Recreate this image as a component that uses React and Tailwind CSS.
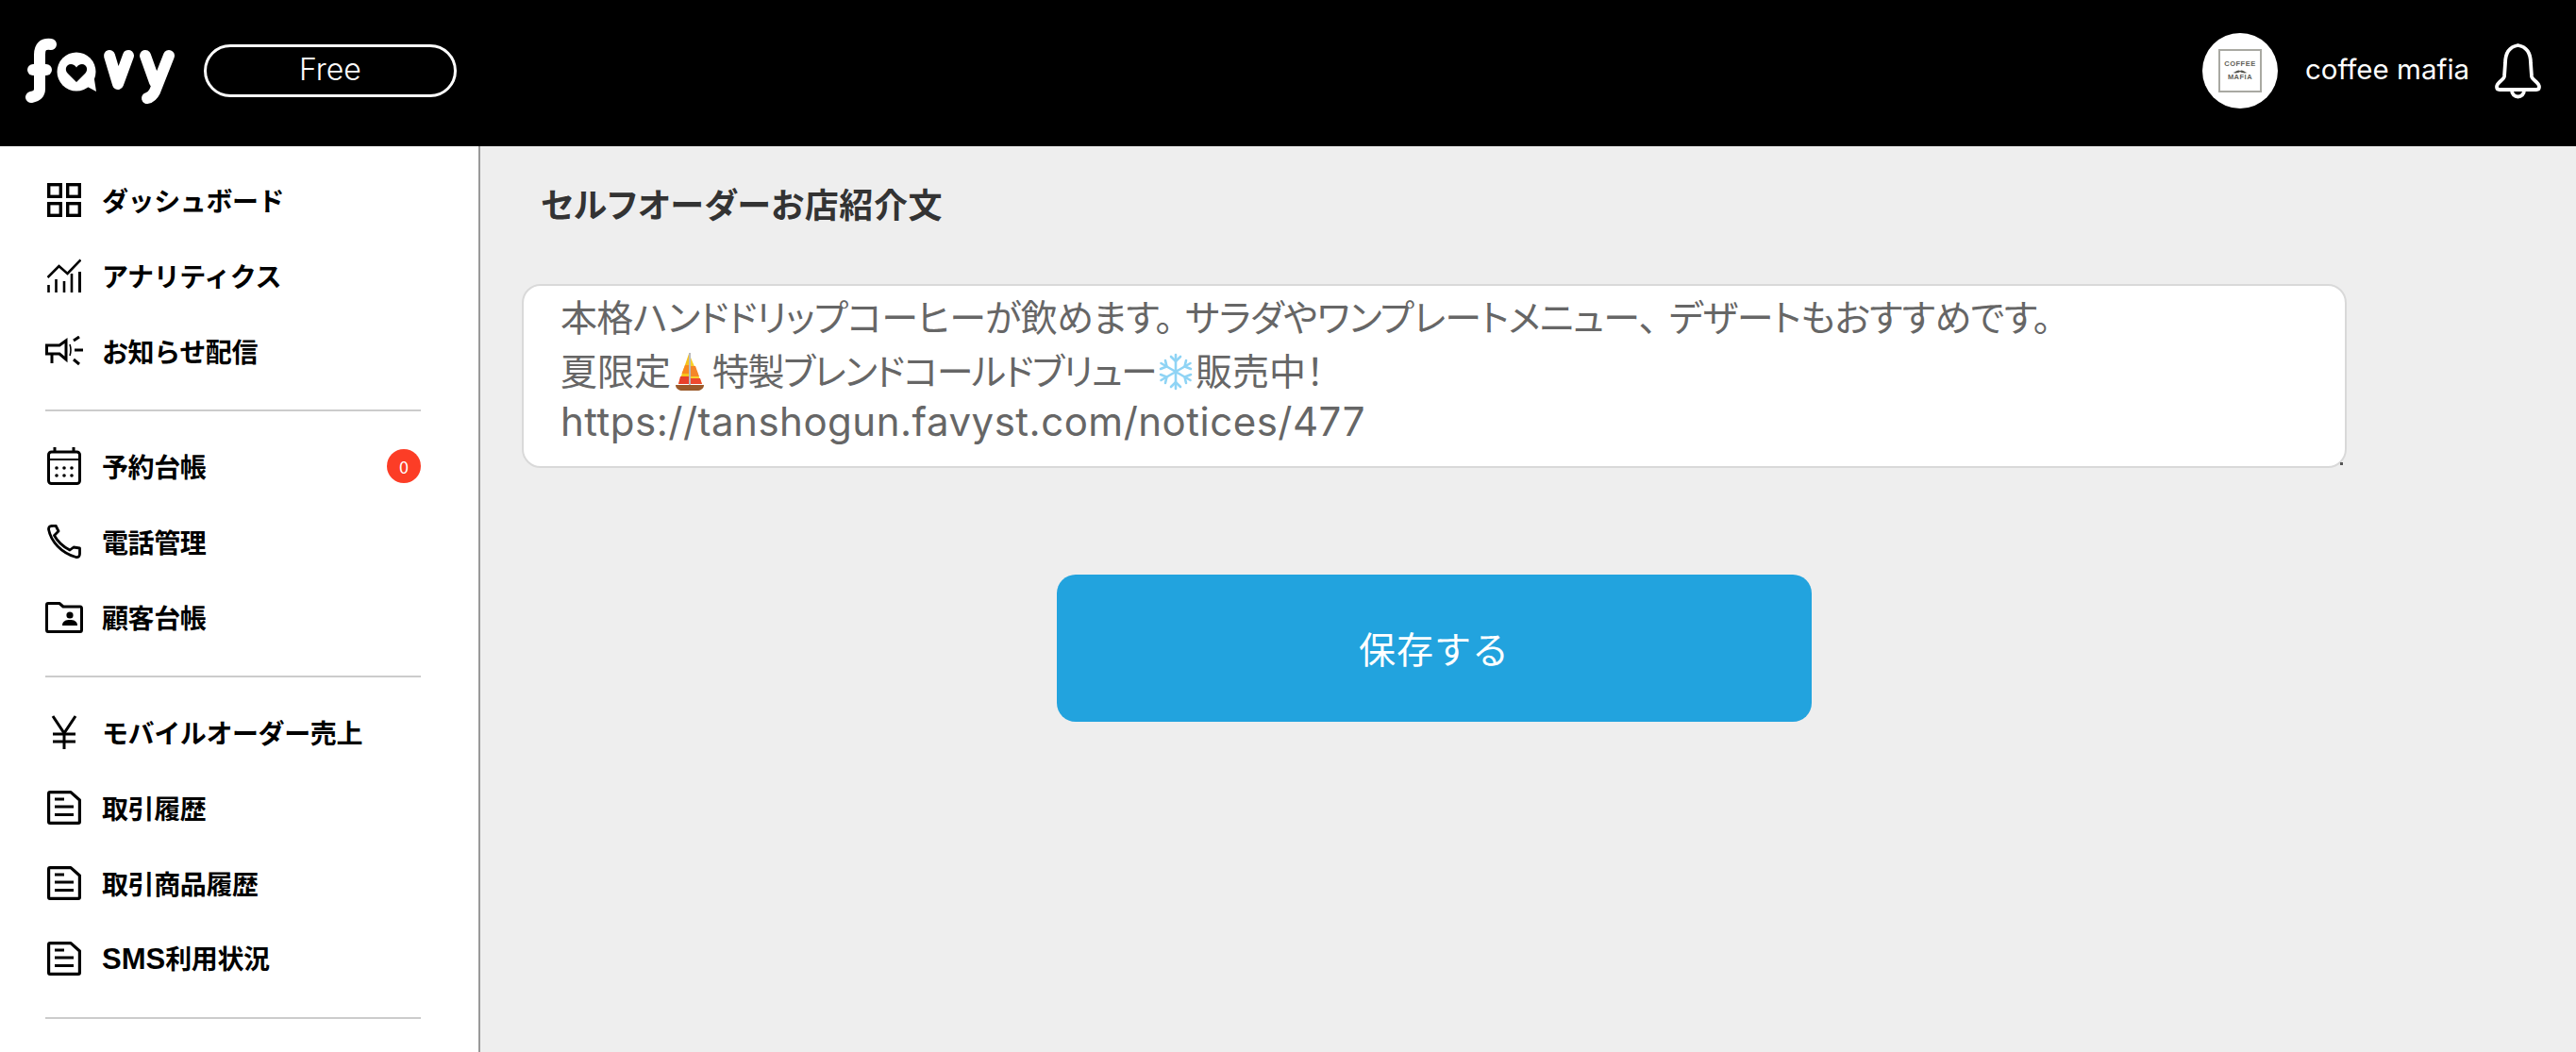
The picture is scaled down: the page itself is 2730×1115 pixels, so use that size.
// App.jsx
import React from 'react';

const FavyLogo = () => (
  <svg width="160" height="72" viewBox="0 0 160 72" className="shrink-0 mt-[2px]" fill="none" stroke="white" strokeWidth="12" strokeLinecap="round" strokeLinejoin="round">
    {/* f */}
    <path d="M27 7 C18 6 15 10 15 18 L15 54 C15 60 11 62 6 63" />
    <path d="M8 34 L22 34" />
    {/* a: speech bubble with heart */}
    <circle cx="54" cy="36" r="20.5" fill="white" stroke="none" />
    <path d="M62 50 L75 57 L72 38 Z" fill="white" stroke="none" />
    <path d="M54 47 L44.5 37.5 C41 33.5 43.5 28 48 28 C50.5 28 52.8 29.5 54 31.5 C55.2 29.5 57.5 28 60 28 C64.5 28 67 33.5 63.5 37.5 Z" fill="black" stroke="none" />
    {/* v */}
    <path d="M89 19 L98 49 L109 19" />
    {/* y */}
    <path d="M127 19 L137 47" />
    <path d="M152 19 L137 57 C135 61 133 63 129 64" />
  </svg>
);

const BellIcon = () => (
  <svg width="50" height="60" viewBox="0 0 50 60" fill="none" stroke="white" strokeWidth="3.8" strokeLinejoin="round" className="shrink-0">
    <path d="M24.5 3 C13 5 11 14 11 22 L10 36 C9.5 40 2 42 2 47 C2 49 3 50 5 50 L44 50 C46 50 47 49 47 47 C47 42 39.5 40 39 36 L38 22 C38 14 36 5 24.5 3 Z" />
    <path d="M18 51 a6.5 6.5 0 0 0 13 0" />
  </svg>
);

const IconDashboard = () => (
  <svg width="36" height="36" viewBox="0 0 36 36" fill="none" stroke="black" strokeWidth="3.4">
    <rect x="1.7" y="1.7" width="12.6" height="12.6" />
    <rect x="21.7" y="1.7" width="12.6" height="12.6" />
    <rect x="1.7" y="21.7" width="12.6" height="12.6" />
    <rect x="21.7" y="21.7" width="12.6" height="12.6" />
  </svg>
);

const IconAnalytics = () => (
  <svg width="36" height="36" viewBox="0 0 36 36" fill="none" stroke="black" strokeWidth="2.6">
    <path d="M0.5 20 L12.5 8 L21.5 16 L35.5 1.5" />
    <path d="M1.5 28 V36 M9.5 22 V36 M18 24 V36 M26 16 V36" />
    <path d="M34.5 14 V36" strokeWidth="3" />
  </svg>
);

const IconMegaphone = () => (
  <svg width="40" height="32" viewBox="0 0 40 32" fill="none" stroke="black" strokeWidth="3">
    <path d="M1.5 10 H15 L22 5 V25 L15 19 H1.5 Z" />
    <path d="M7 19 V29" />
    <path d="M26 9 Q28 15 26 21" strokeWidth="1.6" />
    <path d="M30 5 L36 1 M31 15 H40 M30 25 L36 30" />
  </svg>
);

const IconCalendar = () => (
  <svg width="36" height="40" viewBox="0 0 36 40" fill="none" stroke="black" strokeWidth="3">
    <rect x="1.5" y="5" width="33" height="33.5" rx="3" />
    <path d="M1.5 13 H34.5" strokeWidth="2" />
    <path d="M8 0 V5 M28 0 V5" />
    <g fill="black" stroke="none">
      <circle cx="10" cy="22" r="1.8" /><circle cx="18" cy="22" r="1.8" /><circle cx="26" cy="22" r="1.8" />
      <circle cx="10" cy="30" r="1.8" /><circle cx="18" cy="30" r="1.8" /><circle cx="26" cy="30" r="1.8" />
    </g>
  </svg>
);

const IconPhone = () => (
  <svg width="36" height="36" viewBox="0 0 36 36" fill="none" stroke="black" strokeWidth="2.8" strokeLinejoin="round">
    <path d="M1.5 5 Q1.5 2 4 1.5 L9 1 L12 7 L7.5 11.5 C10.5 17 16 23 24 27 L28 24 L34.5 25 L34.5 31 Q34.5 35 30.5 34.5 C15 30 4 18 1.5 5 Z" />
  </svg>
);

const IconFolder = () => (
  <svg width="40" height="33" viewBox="0 0 40 33" fill="none" stroke="black" strokeWidth="3" strokeLinejoin="round">
    <path d="M1.5 3 Q1.5 1.5 3 1.5 H15 L19 5 H37 Q38.5 5 38.5 7 V29.5 Q38.5 31.5 37 31.5 H3 Q1.5 31.5 1.5 29.5 Z" />
    <circle cx="26" cy="14" r="3.6" fill="black" stroke="none" />
    <path d="M18 25 C18 20 22 19 26 19 C30 19 34 20 34 25 Z" fill="black" stroke="none" />
  </svg>
);

const IconYen = () => (
  <svg width="36" height="36" viewBox="0 0 36 36" fill="none" stroke="black" strokeWidth="3">
    <path d="M6 1 L18 19 L30 1" />
    <path d="M18 19 V36" />
    <path d="M6 20 H30 M6 28 H30" />
  </svg>
);

const IconDoc = () => (
  <svg width="36" height="36" viewBox="0 0 36 36" fill="none" stroke="black" strokeWidth="3.2" strokeLinejoin="round">
    <path d="M1.6 3 Q1.6 1.6 3 1.6 H25 L34.4 10 V33 Q34.4 34.4 33 34.4 H3 Q1.6 34.4 1.6 33 Z" />
    <path d="M8 9 H18 M8 17 H28 M8 25.5 H28" strokeWidth="3" />
  </svg>
);

const IconBoat = () => (
  <svg width="36" height="40" viewBox="0 0 36 40" className="inline-block align-[-6px] ml-[2px] mr-[6px]">
    <path d="M17 1 L17 33 L6 33 Z" fill="#f6c21c" />
    <path d="M13 13 L17 13 L17 22 L9.5 22 Z" fill="#f98a1f" />
    <path d="M8 25 L17 25 L17 33 L6 33 Z" fill="#e8402a" />
    <path d="M19 5 L31 33 L19 33 Z" fill="#f8d12b" />
    <path d="M19 14 L24 14 L28 25 L19 25 Z" fill="#f5862a" />
    <path d="M19 27 L29 27 L31 33 L19 33 Z" fill="#ee4a2e" />
    <path d="M18 0 V35" stroke="#777" strokeWidth="1" />
    <path d="M3 34 H33 C33 38 29 40 26 40 H10 C7 40 3 38 3 34 Z" fill="#9b5a2a" />
  </svg>
);

const IconSnow = () => (
  <svg width="38" height="40" viewBox="0 0 38 40" className="inline-block align-[-6px] mx-[2px]" fill="none" stroke="#8fd4f5" strokeWidth="2.6" strokeLinecap="round">
    <path d="M19 2 V38 M3.5 11 L34.5 29 M3.5 29 L34.5 11" />
    <path d="M14 4 L19 9 L24 4 M14 36 L19 31 L24 36" />
    <path d="M3 17 L9.5 14.5 L8 8 M30 32 L28.5 25.5 L35 23" />
    <path d="M3 23 L9.5 25.5 L8 32 M30 8 L28.5 14.5 L35 17" />
  </svg>
);

// Filas del menú lateral, agrupadas por divisor
const menuGroups = [
  [
    { label: 'ダッシュボード', icon: <IconDashboard /> },
    { label: 'アナリティクス', icon: <IconAnalytics /> },
    { label: 'お知らせ配信', icon: <IconMegaphone /> },
  ],
  [
    { label: '予約台帳', icon: <IconCalendar />, badge: '0' },
    { label: '電話管理', icon: <IconPhone /> },
    { label: '顧客台帳', icon: <IconFolder /> },
  ],
  [
    { label: 'モバイルオーダー売上', icon: <IconYen /> },
    { label: '取引履歴', icon: <IconDoc /> },
    { label: '取引商品履歴', icon: <IconDoc /> },
    { label: '利用状況', latin: 'SMS', icon: <IconDoc /> },
  ],
];

export default function App() {
  return (
    <div className="h-screen flex flex-col overflow-hidden bg-[#eeeeee] font-['Noto_Sans_CJK_JP','Noto_Sans',sans-serif]">
      <header className="h-[155px] shrink-0 bg-black flex items-center justify-between pl-[27px] pr-[36px] pb-[5px]">
        <div className="flex items-center gap-[29px]">
          <FavyLogo />
          <div className="w-[268px] h-[56px] pb-[2px] border-[3px] border-white rounded-full flex items-center justify-center text-white text-[32px] leading-none font-['Inter',sans-serif] font-light">
            Free
          </div>
        </div>
        <div className="flex items-center">
          <div className="w-[80px] h-[80px] rounded-full bg-white flex items-center justify-center">
            <div className="w-[46px] h-[46px] border-2 border-[#a9a9a2] flex flex-col items-center justify-center text-[#5f5f58] font-['Liberation_Sans',sans-serif] font-bold text-[7.5px] leading-[8px] tracking-[0.5px]">
              <span>COFFEE</span>
              <svg width="16" height="6" viewBox="0 0 16 6"><path d="M0 5 C3 5 5 1 8 3 C11 1 13 5 16 5 C12 6 9 5 8 4 C7 5 4 6 0 5 Z" fill="#55554f" /></svg>
              <span>MAFIA</span>
            </div>
          </div>
          <span className="ml-[29px] pb-[3px] w-[171px] text-white text-[29.5px] leading-none font-['Inter',sans-serif] font-normal whitespace-nowrap">coffee mafia</span>
          <div className="ml-[30px]"><BellIcon /></div>
        </div>
      </header>

      <div className="flex-1 flex min-h-0">
        <aside className="w-[509px] shrink-0 bg-white border-r-2 border-[#999999] pl-[48px] pr-[61px] pt-[17px]">
          {menuGroups.map((group, i) => (
            <div key={i} className="pb-[22px] mb-[18px] border-b-2 border-[#cccccc]">
              {group.map((item) => (
                <div key={item.label} className="h-[80px] flex items-center">
                  <div className="w-[40px] h-[40px] flex items-center justify-center shrink-0">{item.icon}</div>
                  <span className="ml-[20px] text-[28px] leading-none font-bold text-black tracking-[-0.4px]">
                    {item.latin && <span className="text-[31px] tracking-[0px] font-['Liberation_Sans',sans-serif]">{item.latin}</span>}
                    {item.label}
                  </span>
                  {item.badge && (
                    <span className="ml-auto w-[36px] h-[36px] rounded-full bg-[#fc3d26] text-white text-[18px] leading-none flex items-center justify-center">
                      {item.badge}
                    </span>
                  )}
                </div>
              ))}
            </div>
          ))}
        </aside>

        <main className="flex-1 pl-[44px]">
          <div className="w-[1934px]">
            <h1 className="pt-[35px] pl-[20px] mb-[61px] text-[36px] leading-[50px] font-bold text-[#333333] tracking-[0.6px] [font-feature-settings:'palt']">
              セルフオーダーお店紹介文
            </h1>
            <div className="relative h-[195px] bg-white border-2 border-[#d9d9d9] rounded-[20px] pt-[3px] pl-[39px] text-[39px] leading-[57px] text-[#666666] [font-feature-settings:'palt']">
              <div className="tracking-[-0.7px]">
                本格ハンドドリップコーヒーが飲めます<span className="mr-[13px]">。</span>サラダやワンプレートメニュー<span className="mr-[13px]">、</span>デザートもおすすめです。
              </div>
              <div>
                夏限定<IconBoat /><span className="tracking-[-1.6px]">特製ブレンドコールドブリュー</span><IconSnow />販売中！
              </div>
              <div className="font-['Inter',sans-serif] font-normal text-[42px] tracking-[0.5px] leading-[53px]">https://tanshogun.favyst.com/notices/477</div>
              <span className="absolute right-[2px] bottom-[1px] w-[3px] h-[3px] bg-[#555555]" />
            </div>
            <button className="block mx-auto mt-[113px] pb-[2px] w-[800px] h-[156px] rounded-[20px] bg-[#22a3de] text-white text-[39px] tracking-[1px]">
              保存する
            </button>
          </div>
        </main>
      </div>
    </div>
  );
}
